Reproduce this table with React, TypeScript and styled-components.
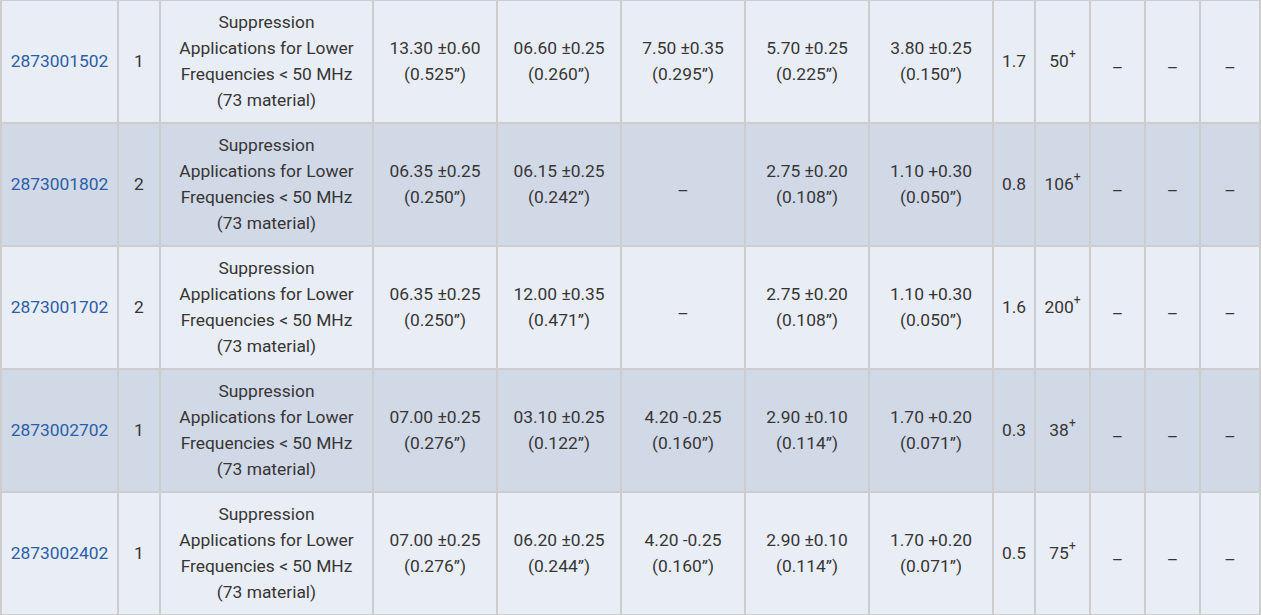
import React from "react";
import styled, { createGlobalStyle } from "styled-components";

const GlobalStyle = createGlobalStyle`
  html, body {
    margin: 0;
    padding: 0;
    background: #ffffff;
    overflow: hidden;
  }
  body {
    font-family: Roboto, "Liberation Sans", Arial, sans-serif;
  }
`;

const Wrapper = styled.div`
  width: 1261px;
  height: 615px;
  overflow: hidden;
`;

const Table = styled.table`
  width: 1261px;
  margin-top: -1px;
  table-layout: fixed;
  border-collapse: separate;
  border-spacing: 0;
  border-left: 2px solid #cdcdcd;
  border-top: 2px solid #cdcdcd;
`;

const Col = styled.col<{ $w: number }>`
  width: ${(p) => p.$w}px;
`;

const Row = styled.tr<{ $alt: boolean }>`
  height: 123px;
  background-color: ${(p) => (p.$alt ? "#d1d8e6" : "#e9edf5")};
`;

const Cell = styled.td<{ $dash?: boolean }>`
  box-sizing: border-box;
  border-right: 2px solid #cdcdcd;
  border-bottom: 2px solid #cdcdcd;
  padding: ${(p) => (p.$dash ? "12px 0 0" : "0 0 2px")};
  text-align: center;
  vertical-align: middle;
  font-size: 17.4px;
  line-height: 26px;
  color: #363636;
  white-space: nowrap;
`;

const PartLink = styled.a`
  color: #2b5ea9;
  text-decoration: none;
`;

const Sup = styled.sup`
  font-size: 12px;
  line-height: 0;
  position: relative;
  top: -2px;
`;

interface Dim {
  mm: string;
  inch: string;
}

interface Part {
  id: string;
  turns: string;
  a: Dim;
  b: Dim;
  c: Dim | null;
  d: Dim;
  e: Dim;
  weight: string;
  imp: string;
}

const parts: Part[] = [
  {
    id: "2873001502",
    turns: "1",
    a: { mm: "13.30 ±0.60", inch: "(0.525”)" },
    b: { mm: "06.60 ±0.25", inch: "(0.260”)" },
    c: { mm: "7.50 ±0.35", inch: "(0.295”)" },
    d: { mm: "5.70 ±0.25", inch: "(0.225”)" },
    e: { mm: "3.80 ±0.25", inch: "(0.150”)" },
    weight: "1.7",
    imp: "50",
  },
  {
    id: "2873001802",
    turns: "2",
    a: { mm: "06.35 ±0.25", inch: "(0.250”)" },
    b: { mm: "06.15 ±0.25", inch: "(0.242”)" },
    c: null,
    d: { mm: "2.75 ±0.20", inch: "(0.108”)" },
    e: { mm: "1.10 +0.30", inch: "(0.050”)" },
    weight: "0.8",
    imp: "106",
  },
  {
    id: "2873001702",
    turns: "2",
    a: { mm: "06.35 ±0.25", inch: "(0.250”)" },
    b: { mm: "12.00 ±0.35", inch: "(0.471”)" },
    c: null,
    d: { mm: "2.75 ±0.20", inch: "(0.108”)" },
    e: { mm: "1.10 +0.30", inch: "(0.050”)" },
    weight: "1.6",
    imp: "200",
  },
  {
    id: "2873002702",
    turns: "1",
    a: { mm: "07.00 ±0.25", inch: "(0.276”)" },
    b: { mm: "03.10 ±0.25", inch: "(0.122”)" },
    c: { mm: "4.20 -0.25", inch: "(0.160”)" },
    d: { mm: "2.90 ±0.10", inch: "(0.114”)" },
    e: { mm: "1.70 +0.20", inch: "(0.071”)" },
    weight: "0.3",
    imp: "38",
  },
  {
    id: "2873002402",
    turns: "1",
    a: { mm: "07.00 ±0.25", inch: "(0.276”)" },
    b: { mm: "06.20 ±0.25", inch: "(0.244”)" },
    c: { mm: "4.20 -0.25", inch: "(0.160”)" },
    d: { mm: "2.90 ±0.10", inch: "(0.114”)" },
    e: { mm: "1.70 +0.20", inch: "(0.071”)" },
    weight: "0.5",
    imp: "75",
  },
];

const widths = [117, 42, 213, 124, 124, 124, 124, 124, 42, 55, 55, 55, 60];

const DimCell: React.FC<{ dim: Dim | null }> = ({ dim }) => {
  if (!dim) return <Cell $dash>–</Cell>;
  return (
    <Cell>
      {dim.mm}
      <br />
      {dim.inch}
    </Cell>
  );
};

const App: React.FC = () => {
  return (
    <Wrapper>
      <GlobalStyle />
      <Table>
        <colgroup>
          {widths.map((w, i) => (
            <Col key={i} $w={w} />
          ))}
        </colgroup>
        <tbody>
          {parts.map((p, i) => (
            <Row key={p.id} $alt={i % 2 === 1}>
              <Cell>
                <PartLink href="#">{p.id}</PartLink>
              </Cell>
              <Cell>{p.turns}</Cell>
              <Cell>
                Suppression
                <br />
                Applications for Lower
                <br />
                Frequencies &lt; 50 MHz
                <br />
                (73 material)
              </Cell>
              <DimCell dim={p.a} />
              <DimCell dim={p.b} />
              <DimCell dim={p.c} />
              <DimCell dim={p.d} />
              <DimCell dim={p.e} />
              <Cell>{p.weight}</Cell>
              <Cell>
                {p.imp}
                <Sup>+</Sup>
              </Cell>
              <Cell $dash>–</Cell>
              <Cell $dash>–</Cell>
              <Cell $dash>–</Cell>
            </Row>
          ))}
        </tbody>
      </Table>
    </Wrapper>
  );
};

export default App;
